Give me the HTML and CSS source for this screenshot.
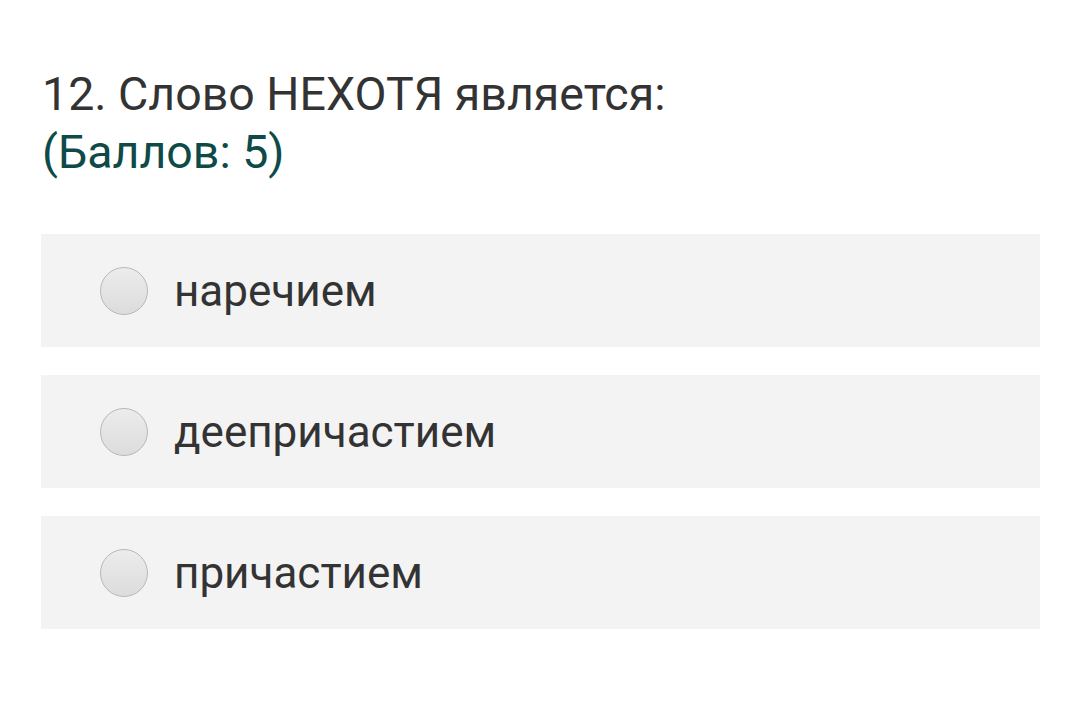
FILE: index.html
```html
<!DOCTYPE html>
<html lang="ru">
<head>
<meta charset="utf-8">
<link rel="stylesheet" href="styles.css">
</head>
<body>
<div class="page">
  <div class="question">
    <div class="title">12. Слово НЕХОТЯ является:</div>
    <div class="points">(Баллов: 5)</div>
  </div>
  <div class="options">
    <label class="option"><span class="radio"></span><span class="label">наречием</span></label>
    <label class="option"><span class="radio"></span><span class="label">деепричастием</span></label>
    <label class="option"><span class="radio"></span><span class="label">причастием</span></label>
  </div>
</div>
</body>
</html>
```
FILE: styles.css
```css
html, body {
  margin: 0;
  padding: 0;
  background: #ffffff;
}
body {
  font-family: Roboto, "Noto Sans", sans-serif;
  color: #333333;
}
.page {
  padding: 65px 40px 0 41px;
}
.question {
  padding-left: 1px;
  font-size: 46.5px;
  line-height: 58px;
}
.title {
  color: #333333;
}
.points {
  color: #0e4a47;
}
.options {
  margin-top: 53px;
  display: flex;
  flex-direction: column;
  gap: 28px;
}
.option {
  display: flex;
  align-items: center;
  height: 113px;
  background: #f3f3f3;
  padding-left: 59px;
  box-sizing: border-box;
}
.radio {
  width: 48px;
  height: 48px;
  border-radius: 50%;
  border: 1px solid #b8b8b8;
  background: linear-gradient(#ececec, #dcdcdc);
  box-sizing: border-box;
  flex: none;
}
.label {
  margin-left: 26px;
  font-size: 44px;
  color: #333333;
}
```
